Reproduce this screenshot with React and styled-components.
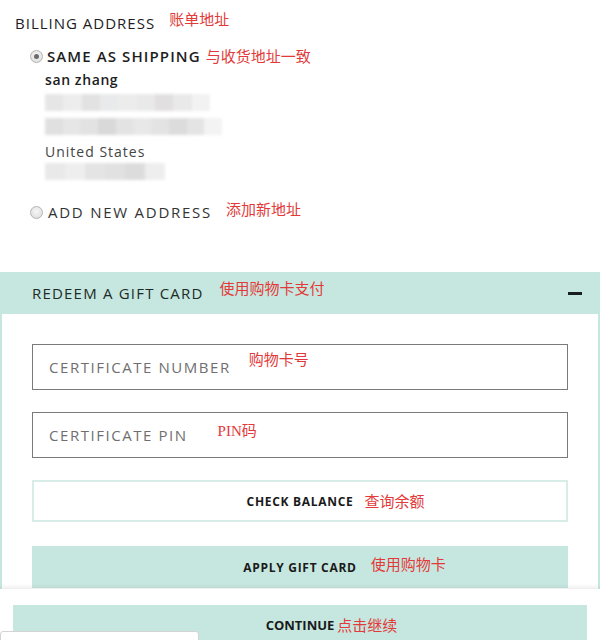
import styled, { createGlobalStyle } from "styled-components";

const GlobalStyle = createGlobalStyle`
  html, body {
    margin: 0;
    padding: 0;
    background: #fff;
  }
  body {
    font-family: "Open Sans", "Noto Sans", sans-serif;
    color: #1d1d1d;
  }
`;

const Page = styled.div`
  width: 600px;
  min-height: 700px;
  padding-bottom: 60px;
`;

const Billing = styled.section`
  padding: 12px 15px 0;
`;

const Heading = styled.div`
  display: flex;
  align-items: center;
  height: 22px;
  font-size: 15px;
  letter-spacing: 1px;
  text-transform: uppercase;
`;

// the english label; the red chinese annotation hangs off its right end
const Text = styled.span`
  position: relative;
  white-space: nowrap;
`;

const Note = styled.span`
  position: absolute;
  left: calc(100% + ${(p) => p.gap}px);
  top: calc(50% - 11px + ${(p) => p.lift || 0}px);
  line-height: 22px;
  white-space: nowrap;
  color: #e23a3a;
  font-family: ${(p) =>
    p.serif
      ? `"Liberation Serif", "Noto Sans CJK SC", serif`
      : `"Noto Sans CJK SC", sans-serif`};
  font-size: 15px;
  font-weight: 400;
  letter-spacing: 0;
  text-transform: none;
`;

const Option = styled.label`
  display: flex;
  align-items: center;
  margin-left: 15px;
  margin-top: ${(p) => p.top}px;
  font-size: 15px;
  letter-spacing: ${(p) => (p.light ? "1.75px" : "1.1px")};
  font-weight: ${(p) => (p.light ? 400 : 600)};
  color: ${(p) => (p.light ? "#333" : "#1d1d1d")};
  text-transform: uppercase;
`;

const Radio = styled.span`
  width: 11px;
  height: 11px;
  border-radius: 50%;
  border: 1px solid #b4b4b4;
  background: radial-gradient(circle at 50% 40%, #f6f6f6, #dadada);
  margin-right: ${(p) => (p.checked ? 4 : 5)}px;
  display: flex;
  align-items: center;
  justify-content: center;
  &::after {
    content: "";
    width: 5px;
    height: 5px;
    border-radius: 50%;
    background: ${(p) => (p.checked ? "#6b6b6b" : "transparent")};
  }
`;

const Address = styled.div`
  margin-left: 30px;
  display: flex;
  flex-direction: column;
`;

const Name = styled.div`
  font-size: 14px;
  font-weight: 600;
  letter-spacing: 0.6px;
  line-height: 18px;
  margin-top: 5px;
`;

const Country = styled.div`
  font-size: 14px;
  color: #444;
  letter-spacing: 1px;
  line-height: 18px;
  margin-top: 8px;
`;

const Blur = styled.div`
  display: flex;
  width: ${(p) => p.w}px;
  height: 17px;
  margin-top: ${(p) => p.top}px;
  filter: blur(1.5px);
`;

const Pixel = styled.div`
  flex: 1;
  background: ${(p) => p.c};
`;

const GiftPanel = styled.section`
  margin-top: 50px;
  border: 2px solid #c6e7df;
  border-top: none;
`;

const PanelHead = styled.div`
  display: flex;
  align-items: center;
  height: 42px;
  margin: 0 -2px;
  padding: 0 18px 0 32px;
  background: #c6e7df;
  font-size: 15px;
  letter-spacing: 1.2px;
  text-transform: uppercase;
  color: #1d2a27;
`;

const Minus = styled.span`
  margin-left: auto;
  width: 14px;
  height: 3px;
  background: #16201e;
`;

const PanelBody = styled.div`
  padding: 30px 30px 0;
  display: flex;
  flex-direction: column;
`;

const Field = styled.div`
  display: flex;
  align-items: center;
  height: 44px;
  border: 1px solid #7a7a7a;
  padding-left: 16px;
  margin-bottom: 22px;
  font-size: 15px;
  letter-spacing: 1.55px;
  color: #6f6f6f;
  text-transform: uppercase;
`;

const Button = styled.div`
  display: flex;
  align-items: center;
  justify-content: center;
  height: ${(p) => (p.filled ? 42 : 38)}px;
  border: ${(p) => (p.filled ? "none" : "2px solid #d9ede8")};
  background: ${(p) => (p.filled ? "#c6e7df" : "#fff")};
  margin-bottom: ${(p) => p.mb || 0}px;
  font-size: 12px;
  font-weight: 700;
  letter-spacing: 0.7px;
  color: #1a1a1a;
  text-transform: uppercase;
`;

const Footer = styled.div`
  position: fixed;
  left: 0;
  bottom: 0;
  width: 600px;
  height: 51px;
  background: #fff;
  box-shadow: 0 -2px 4px rgba(0, 0, 0, 0.08);
  padding: 16px 13px 0;
  box-sizing: border-box;
`;

const ContinueButton = styled(Button)`
  height: 40px;
  font-size: 13px;
  letter-spacing: 0;
`;

const Widget = styled.div`
  position: fixed;
  left: 0;
  bottom: -10px;
  width: 197px;
  height: 17px;
  background: #fff;
  border: 1px solid #d4d4d4;
  border-radius: 3px;
`;

const blurRows = [
  ["#e6e6e6", "#ededed", "#e2e2e2", "#e8eaeb", "#ececec", "#e9e9e9", "#e2dfe0", "#e9e9e9", "#f2f2f2"],
  ["#e0e0e0", "#e6e6e6", "#e2e2e2", "#d9d9d9", "#e3e3e3", "#e8e8e8", "#e3e3e3", "#dcdcdc", "#e4e4e4", "#f3f3f3"],
  ["#e9e9e9", "#eeeeee", "#e4e4e4", "#e1e1e1", "#dcdcdc", "#eeeeee"],
];

const Tagged = ({ children, note, gap, lift, serif }) => (
  <Text>
    {children}
    <Note gap={gap} lift={lift} serif={serif}>
      {note}
    </Note>
  </Text>
);

export default function App() {
  return (
    <Page>
      <GlobalStyle />
      <Billing>
        <Heading>
          <Tagged note="账单地址" gap={14} lift={-4}>Billing Address</Tagged>
        </Heading>
        <Option top={12}>
          <Radio checked />
          <Tagged note="与收货地址一致" gap={5}>Same as shipping</Tagged>
        </Option>
        <Address>
          <Name>san zhang</Name>
          <Blur w={165} top={5}>
            {blurRows[0].map((c, i) => <Pixel key={i} c={c} />)}
          </Blur>
          <Blur w={177} top={7}>
            {blurRows[1].map((c, i) => <Pixel key={i} c={c} />)}
          </Blur>
          <Country>United States</Country>
          <Blur w={120} top={2}>
            {blurRows[2].map((c, i) => <Pixel key={i} c={c} />)}
          </Blur>
        </Address>
        <Option top={22} light>
          <Radio />
          <Tagged note="添加新地址" gap={14} lift={-3}>Add new address</Tagged>
        </Option>
      </Billing>

      <GiftPanel>
        <PanelHead>
          <Tagged note="使用购物卡支付" gap={16} lift={-5}>Redeem a gift card</Tagged>
          <Minus />
        </PanelHead>
        <PanelBody>
          <Field>
            <Tagged note="购物卡号" gap={18} lift={-8}>Certificate number</Tagged>
          </Field>
          <Field>
            <Tagged note="PIN码" gap={30} lift={-4} serif>Certificate pin</Tagged>
          </Field>
          <Button mb={24}>
            <Tagged note="查询余额" gap={11}>Check balance</Tagged>
          </Button>
          <Button filled mb={40}>
            <Tagged note="使用购物卡" gap={14} lift={-3}>Apply gift card</Tagged>
          </Button>
        </PanelBody>
      </GiftPanel>

      <Footer>
        <ContinueButton filled>
          <Tagged note="点击继续" gap={3}>Continue</Tagged>
        </ContinueButton>
      </Footer>
      <Widget />
    </Page>
  );
}
